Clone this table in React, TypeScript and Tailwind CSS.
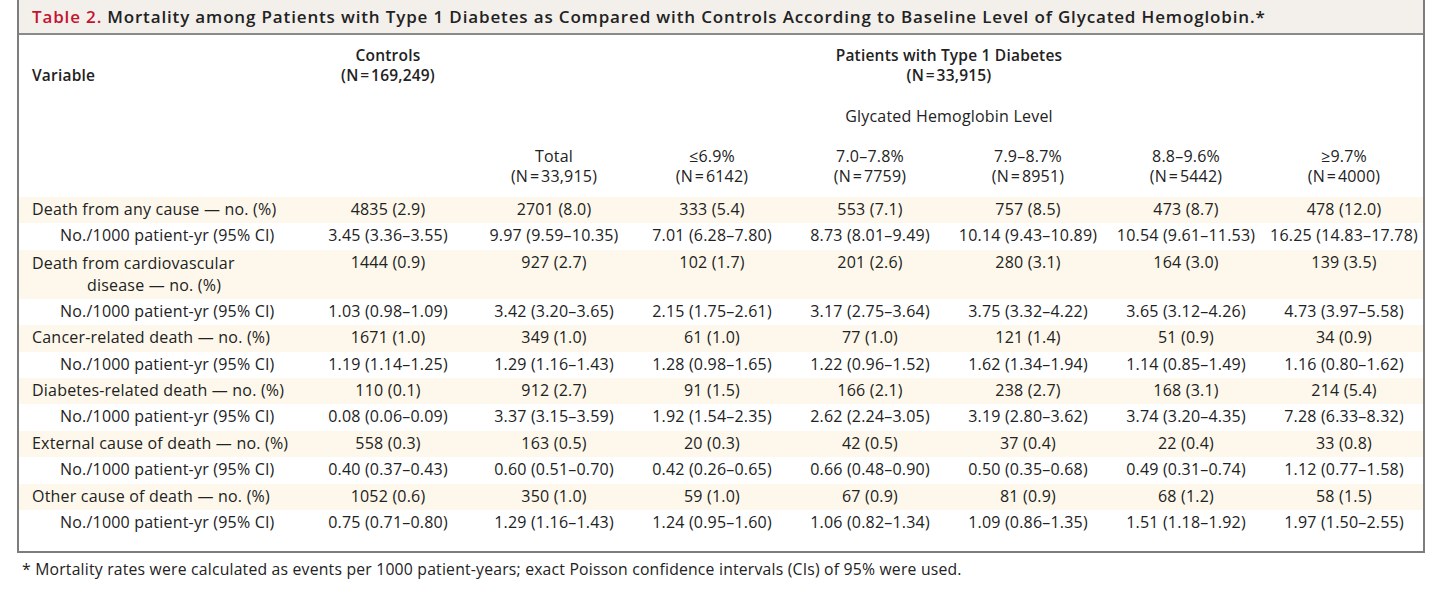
const cols = [
  { label: "Total", n: "(N\u200a=\u200a33,915)" },
  { label: "\u22646.9%", n: "(N\u200a=\u200a6142)" },
  { label: "7.0\u20137.8%", n: "(N\u200a=\u200a7759)" },
  { label: "7.9\u20138.7%", n: "(N\u200a=\u200a8951)" },
  { label: "8.8\u20139.6%", n: "(N\u200a=\u200a5442)" },
  { label: "\u22659.7%", n: "(N\u200a=\u200a4000)" },
];

type Row = { label: string; label2?: string; sub?: boolean; values: string[] };

const rows: Row[] = [
  { label: "Death from any cause \u2014 no. (%)", values: ["4835 (2.9)", "2701 (8.0)", "333 (5.4)", "553 (7.1)", "757 (8.5)", "473 (8.7)", "478 (12.0)"] },
  { label: "No./1000 patient-yr (95% CI)", sub: true, values: ["3.45 (3.36\u20133.55)", "9.97 (9.59\u201310.35)", "7.01 (6.28\u20137.80)", "8.73 (8.01\u20139.49)", "10.14 (9.43\u201310.89)", "10.54 (9.61\u201311.53)", "16.25 (14.83\u201317.78)"] },
  { label: "Death from cardiovascular", label2: "disease \u2014 no. (%)", values: ["1444 (0.9)", "927 (2.7)", "102 (1.7)", "201 (2.6)", "280 (3.1)", "164 (3.0)", "139 (3.5)"] },
  { label: "No./1000 patient-yr (95% CI)", sub: true, values: ["1.03 (0.98\u20131.09)", "3.42 (3.20\u20133.65)", "2.15 (1.75\u20132.61)", "3.17 (2.75\u20133.64)", "3.75 (3.32\u20134.22)", "3.65 (3.12\u20134.26)", "4.73 (3.97\u20135.58)"] },
  { label: "Cancer-related death \u2014 no. (%)", values: ["1671 (1.0)", "349 (1.0)", "61 (1.0)", "77 (1.0)", "121 (1.4)", "51 (0.9)", "34 (0.9)"] },
  { label: "No./1000 patient-yr (95% CI)", sub: true, values: ["1.19 (1.14\u20131.25)", "1.29 (1.16\u20131.43)", "1.28 (0.98\u20131.65)", "1.22 (0.96\u20131.52)", "1.62 (1.34\u20131.94)", "1.14 (0.85\u20131.49)", "1.16 (0.80\u20131.62)"] },
  { label: "Diabetes-related death \u2014 no. (%)", values: ["110 (0.1)", "912 (2.7)", "91 (1.5)", "166 (2.1)", "238 (2.7)", "168 (3.1)", "214 (5.4)"] },
  { label: "No./1000 patient-yr (95% CI)", sub: true, values: ["0.08 (0.06\u20130.09)", "3.37 (3.15\u20133.59)", "1.92 (1.54\u20132.35)", "2.62 (2.24\u20133.05)", "3.19 (2.80\u20133.62)", "3.74 (3.20\u20134.35)", "7.28 (6.33\u20138.32)"] },
  { label: "External cause of death \u2014 no. (%)", values: ["558 (0.3)", "163 (0.5)", "20 (0.3)", "42 (0.5)", "37 (0.4)", "22 (0.4)", "33 (0.8)"] },
  { label: "No./1000 patient-yr (95% CI)", sub: true, values: ["0.40 (0.37\u20130.43)", "0.60 (0.51\u20130.70)", "0.42 (0.26\u20130.65)", "0.66 (0.48\u20130.90)", "0.50 (0.35\u20130.68)", "0.49 (0.31\u20130.74)", "1.12 (0.77\u20131.58)"] },
  { label: "Other cause of death \u2014 no. (%)", values: ["1052 (0.6)", "350 (1.0)", "59 (1.0)", "67 (0.9)", "81 (0.9)", "68 (1.2)", "58 (1.5)"] },
  { label: "No./1000 patient-yr (95% CI)", sub: true, values: ["0.75 (0.71\u20130.80)", "1.29 (1.16\u20131.43)", "1.24 (0.95\u20131.60)", "1.06 (0.82\u20131.34)", "1.09 (0.86\u20131.35)", "1.51 (1.18\u20131.92)", "1.97 (1.50\u20132.55)"] },
];

export default function App() {
  return (
    <div className="min-h-screen bg-white text-[#222] font-['Open_Sans','Lato',sans-serif] text-[16px] tracking-[0.2px]">
      <div className="ml-[17px] w-[1408px] border-x-2 border-b-2 border-[#7d7d7d]">
        {/* title */}
        <div className="h-[35px] bg-[#f3f0ec] border-b-2 border-[#8a8a8a] pl-[13px] flex items-center font-semibold text-[17px] tracking-[0.85px] whitespace-nowrap">
          <span className="text-[#c4122f]">Table 2.</span>
          <span className="ml-[5px]">
            Mortality among Patients with Type 1 Diabetes as Compared with Controls According to Baseline Level of Glycated Hemoglobin.*
          </span>
        </div>

        <table className="table-fixed w-full border-collapse leading-[20px]">
          <colgroup>
            <col className="w-[282px]" />
            <col className="w-[174px]" />
            <col className="w-[158px]" />
            <col className="w-[158px]" />
            <col className="w-[158px]" />
            <col className="w-[158px]" />
            <col className="w-[158px]" />
            <col className="w-[158px]" />
          </colgroup>
          <thead>
            <tr>
              <th className="pl-[13px] pt-[10px] text-left align-bottom font-semibold text-[15.5px]">Variable</th>
              <th className="pt-[10px] text-center font-semibold text-[15.5px]">
                <div>Controls</div>
                <div>(N{"\u200a=\u200a"}169,249)</div>
              </th>
              <th colSpan={6} className="pt-[10px] text-center font-semibold text-[15.5px]">
                <div>Patients with Type 1 Diabetes</div>
                <div>(N{"\u200a=\u200a"}33,915)</div>
              </th>
            </tr>
            <tr>
              <th />
              <th />
              <th colSpan={6} className="pt-[21px] text-center font-normal">
                Glycated Hemoglobin Level
              </th>
            </tr>
            <tr>
              <th />
              <th />
              {cols.map((c) => (
                <th key={c.label} className="pt-[20px] pb-[11px] text-center font-normal">
                  <div>{c.label}</div>
                  <div>{c.n}</div>
                </th>
              ))}
            </tr>
          </thead>
          <tbody>
            {rows.map((r, i) => (
              <tr key={i} className={r.sub ? "" : "bg-[#fdf8eb]"}>
                <td className={`h-[26.4px] align-top pt-[2px] whitespace-nowrap ${r.sub ? "pl-[41px]" : "pl-[13px]"}`}>
                  <div className={r.label2 ? "leading-[22px]" : ""}>{r.label}</div>
                  {r.label2 && <div className="pl-[55px] leading-[22px] pb-[3px]">{r.label2}</div>}
                </td>
                {r.values.map((v, j) => (
                  <td key={j} className="align-top pt-[2px] text-center whitespace-nowrap">
                    {v}
                  </td>
                ))}
              </tr>
            ))}
            <tr>
              <td colSpan={8} className="h-[15px]" />
            </tr>
          </tbody>
        </table>
      </div>

      <p className="mt-[5px] ml-[22px] text-[15.75px]">
        * Mortality rates were calculated as events per 1000 patient-years; exact Poisson confidence intervals (CIs) of 95% were used.
      </p>
    </div>
  );
}
